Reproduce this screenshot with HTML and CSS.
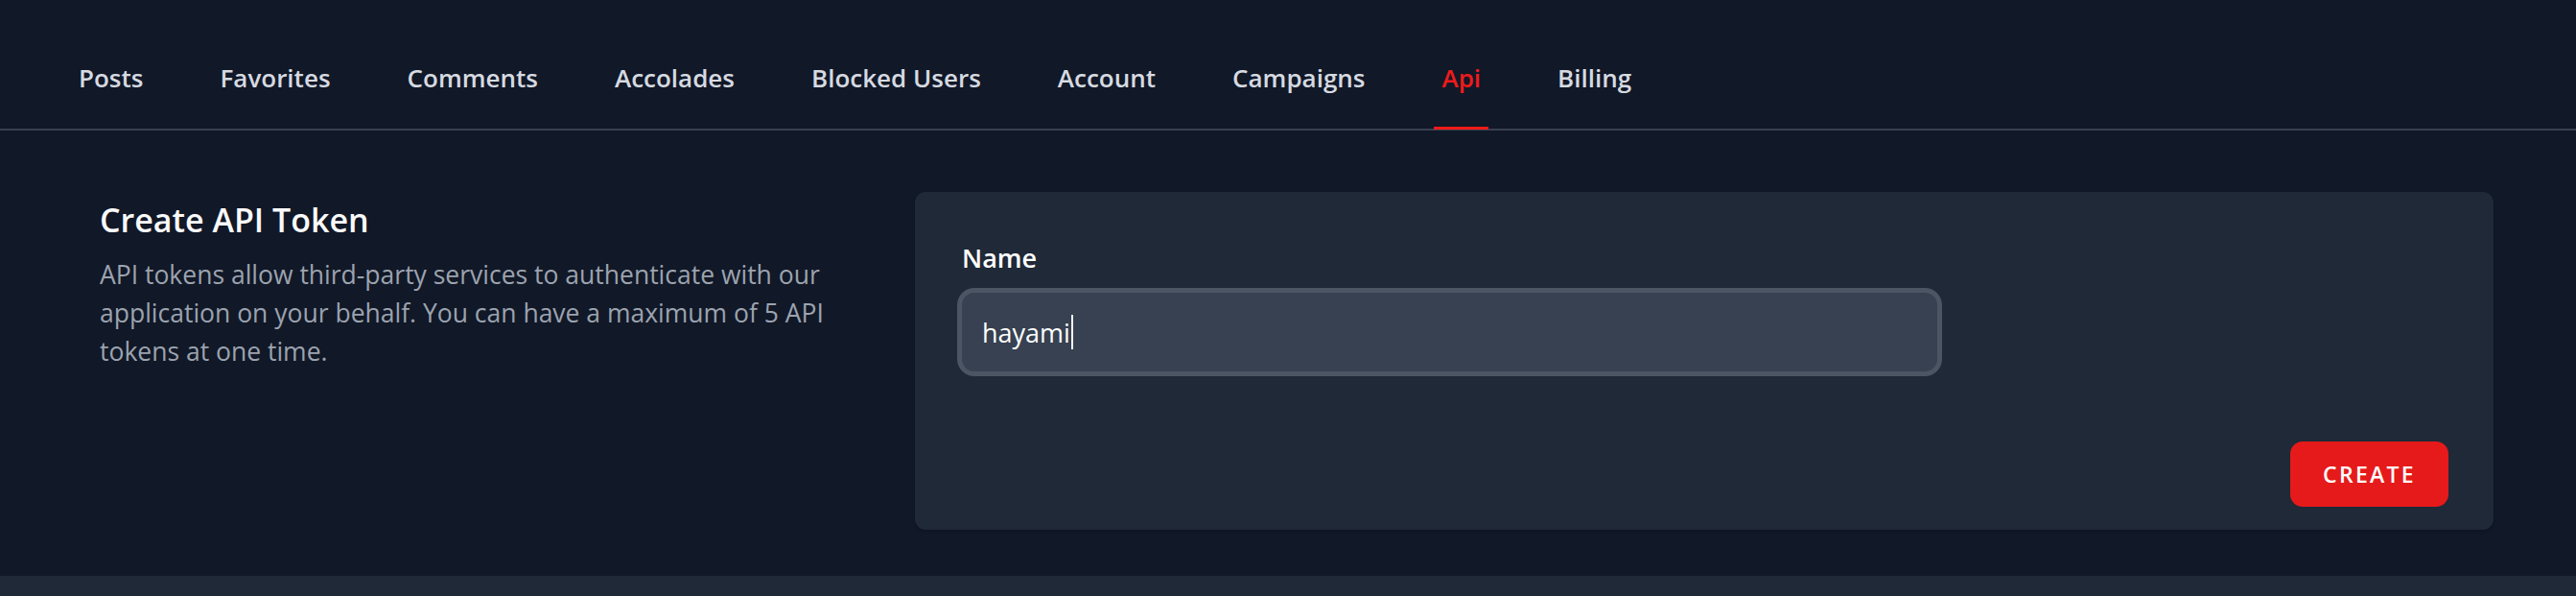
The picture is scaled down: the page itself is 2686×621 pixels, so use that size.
FILE: index.html
```html
<!DOCTYPE html>
<html lang="en">
<head>
<meta charset="utf-8">
<title>API Tokens</title>
<link rel="stylesheet" href="styles.css">
</head>
<body>
<nav class="tabs">
  <a class="tab" href="#">Posts</a>
  <a class="tab" href="#">Favorites</a>
  <a class="tab" href="#">Comments</a>
  <a class="tab" href="#">Accolades</a>
  <a class="tab" href="#">Blocked Users</a>
  <a class="tab" href="#">Account</a>
  <a class="tab" href="#">Campaigns</a>
  <a class="tab active" href="#">Api</a>
  <a class="tab" href="#">Billing</a>
</nav>
<main class="section">
  <div class="intro">
    <h2 class="intro-title">Create API Token</h2>
    <p class="intro-text">API tokens allow third-party services to authenticate with our application on your behalf. You can have a maximum of 5 API tokens at one time.</p>
  </div>
  <div class="card">
    <div class="card-body">
      <label class="field-label">Name</label>
      <div class="input"><span class="input-value">hayami</span><span class="caret"></span></div>
    </div>
    <div class="card-actions">
      <button class="btn" type="button">Create</button>
    </div>
  </div>
</main>
<footer class="band"></footer>
</body>
</html>
```
FILE: styles.css
```css
* { box-sizing: border-box; }
html, body { margin: 0; padding: 0; }
body {
  background: #111827;
  font-family: "Open Sans", "Noto Sans", sans-serif;
  color: #e5e7eb;
  width: 2686px;
  height: 621px;
  overflow: hidden;
}
.tabs {
  display: flex;
  gap: 64px;
  padding: 60px 0 0 74px;
  border-bottom: 2px solid #374151;
}
.tab {
  display: block;
  padding: 0 8px 30px;
  margin-bottom: -1px;
  font-size: 26px;
  line-height: 42px;
  font-weight: 600;
  color: #d6dae1;
  text-decoration: none;
  border-bottom: 3px solid transparent;
}
.tab.active {
  color: #ef1b1b;
  border-bottom-color: #ef1b1b;
}
.section {
  display: grid;
  grid-template-columns: 1fr 1646px;
  column-gap: 42px;
  padding: 64px 86px 48px 104px;
}
.intro-title {
  margin: 5px 0 0;
  font-size: 34px;
  line-height: 48px;
  font-weight: 600;
  color: #f9fafb;
}
.intro-text {
  margin: 13px 0 0;
  font-size: 26.5px;
  line-height: 40px;
  color: #9ca3af;
}
.card {
  background: #1f2937;
  border-radius: 11px;
  box-shadow: 0 1px 3px rgba(0,0,0,0.25);
}
.card-body {
  padding: 48px 49px 0;
}
.field-label {
  display: block;
  font-size: 27px;
  line-height: 42px;
  font-weight: 600;
  color: #ffffff;
  margin-bottom: 15px;
}
.input {
  display: flex;
  align-items: center;
  width: 1017px;
  height: 82px;
  padding: 0 21px;
  background: #374151;
  border-radius: 13px;
  box-shadow: 0 0 0 5px #4b5563;
  font-size: 27px;
  color: #ffffff;
}
.caret {
  display: inline-block;
  width: 2px;
  height: 36px;
  margin-left: 1px;
  background: #f3f4f6;
}
.card-actions {
  display: flex;
  justify-content: flex-end;
  padding: 73px 47px 24px;
}
.btn {
  width: 165px;
  height: 68px;
  border: none;
  border-radius: 13px;
  background: #e61a1a;
  color: #ffffff;
  font-family: "Open Sans", "Noto Sans", sans-serif;
  font-size: 23px;
  font-weight: 600;
  letter-spacing: 0.1em;
  text-transform: uppercase;
}
.band {
  height: 40px;
  background: #1f2937;
}
```
